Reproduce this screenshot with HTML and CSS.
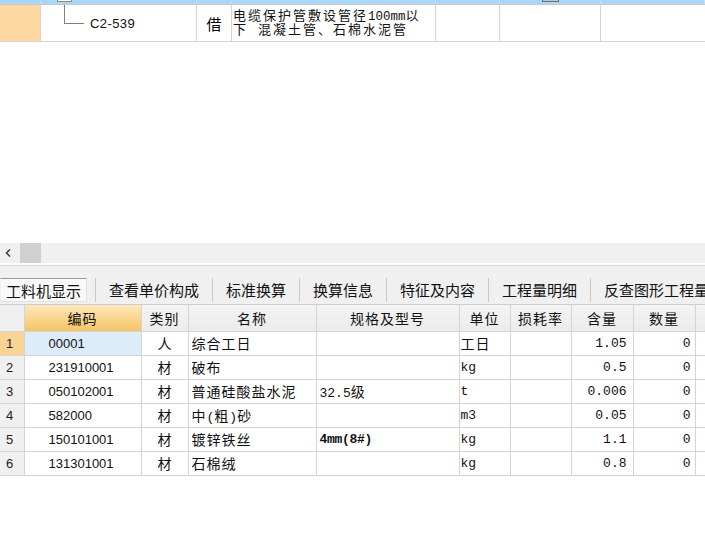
FILE: index.html
```html
<!DOCTYPE html>
<html lang="zh-CN">
<head>
<meta charset="utf-8">
<title>工料机显示</title>
<link rel="stylesheet" href="styles.css">
</head>
<body>
<div class="page">
  <div class="upper">
    <div class="band">
      <div class="bc"></div>
      <div class="bc"><span class="expander"></span></div>
      <div class="bc"></div>
      <div class="bc"></div>
      <div class="bc"></div>
      <div class="bc"><span class="check"></span></div>
      <div class="bc"></div>
    </div>
    <div class="row">
      <div class="cell mark"></div>
      <div class="cell tree"><span class="branch"></span><span class="tcode">C2-539</span></div>
      <div class="cell kind-top">借</div>
      <div class="cell desc">
        <div class="dline">电缆保护管敷设管径<span class="mm">100mm</span>以</div>
        <div class="dline">下<span class="gap"></span>混凝土管、石棉水泥管</div>
      </div>
      <div class="cell"></div>
      <div class="cell"></div>
      <div class="cell"></div>
    </div>
  </div>

  <div class="blank"></div>

  <div class="hscroll">
    <svg class="arrow" width="6" height="8" viewBox="0 0 6 8"><path d="M5 0.5 L1.5 4 L5 7.5" fill="none" stroke="#404040" stroke-width="1.6"/></svg>
    <span class="thumb"></span>
  </div>

  <div class="tabs">
    <span class="tab active">工料机显示</span>
    <span class="sep"></span>
    <span class="tab">查看单价构成</span>
    <span class="sep"></span>
    <span class="tab">标准换算</span>
    <span class="sep"></span>
    <span class="tab">换算信息</span>
    <span class="sep"></span>
    <span class="tab">特征及内容</span>
    <span class="sep"></span>
    <span class="tab">工程量明细</span>
    <span class="sep"></span>
    <span class="tab">反查图形工程量</span>
  </div>

  <table class="grid">
    <colgroup>
      <col class="w-idx"><col class="w-code"><col class="w-kind"><col class="w-name"><col class="w-spec">
      <col class="w-unit"><col class="w-loss"><col class="w-qty"><col class="w-amt"><col class="w-rest">
    </colgroup>
    <thead>
      <tr>
        <th class="idx"></th><th class="hot">编码</th><th>类别</th><th>名称</th><th>规格及型号</th>
        <th>单位</th><th>损耗率</th><th>含量</th><th>数量</th><th class="rest"></th>
      </tr>
    </thead>
    <tbody>
      <tr><td class="idx cur">1</td><td class="code picked">00001</td><td class="kind">人</td><td class="name">综合工日</td><td class="spec"></td><td class="unit cjk">工日</td><td></td><td class="num">1.05</td><td class="num amt">0</td><td></td></tr>
      <tr><td class="idx">2</td><td class="code">231910001</td><td class="kind">材</td><td class="name">破布</td><td class="spec"></td><td class="unit">kg</td><td></td><td class="num">0.5</td><td class="num amt">0</td><td></td></tr>
      <tr><td class="idx">3</td><td class="code">050102001</td><td class="kind">材</td><td class="name">普通硅酸盐水泥</td><td class="spec">32.5<span class="cjk">级</span></td><td class="unit">t</td><td></td><td class="num">0.006</td><td class="num amt">0</td><td></td></tr>
      <tr><td class="idx">4</td><td class="code">582000</td><td class="kind">材</td><td class="name">中<span class="par">(</span>粗<span class="par">)</span>砂</td><td class="spec"></td><td class="unit">m3</td><td></td><td class="num">0.05</td><td class="num amt">0</td><td></td></tr>
      <tr><td class="idx">5</td><td class="code">150101001</td><td class="kind">材</td><td class="name">镀锌铁丝</td><td class="spec strong">4mm(8#)</td><td class="unit">kg</td><td></td><td class="num">1.1</td><td class="num amt">0</td><td></td></tr>
      <tr><td class="idx">6</td><td class="code">131301001</td><td class="kind">材</td><td class="name">石棉绒</td><td class="spec"></td><td class="unit">kg</td><td></td><td class="num">0.8</td><td class="num amt">0</td><td></td></tr>
    </tbody>
  </table>
</div>
</body>
</html>
```

FILE: styles.css
```css
* { box-sizing: border-box; }

html, body {
  margin: 0;
  padding: 0;
  background: #ffffff;
}

body {
  width: 705px;
  height: 540px;
  overflow: hidden;
  font-family: "Noto Sans CJK SC", "Liberation Sans", sans-serif;
  color: #000;
}

.page {
  width: 705px;
}

/* ---------- upper tree grid ---------- */
.band,
.row {
  display: grid;
  grid-template-columns: 41px 156px 35px 204px 64px 101px 104px;
}

.band {
  height: 5px;
  background: #a9d7f7;
  border-bottom: 1px solid #c9c9c9;
  overflow: hidden;
}

.bc {
  border-right: 1px solid #c4ddef;
  display: flex;
  align-items: flex-start;
}

.expander {
  margin-left: 16px;
  width: 15px;
  height: 2px;
  background: #ffffff;
  border: 1px solid #8c8c8c;
  border-top: none;
}

.check {
  margin-left: 42px;
  width: 17px;
  height: 2px;
  background: #c4c4c4;
  border: 1px solid #6e6e6e;
  border-top: none;
}

.row {
  height: 37px;
  border-bottom: 1px solid #d4d4d4;
}

.cell {
  border-right: 1px solid #d4d4d4;
}

.cell:last-child {
  border-right: none;
}

.mark {
  background: #fdd8a1;
}

.tree {
  display: flex;
  align-items: flex-start;
}

.branch {
  margin-left: 23px;
  width: 20px;
  height: 19px;
  border-left: 1px solid #808080;
  border-bottom: 1px solid #808080;
}

.tcode {
  margin-left: 6px;
  margin-top: 12px;
  font-family: "Liberation Sans", sans-serif;
  font-size: 13px;
  letter-spacing: 0.4px;
  line-height: 14px;
  color: #111;
}

.kind-top {
  font-size: 15px;
  line-height: 16px;
  padding-top: 11px;
  text-align: center;
}

.desc {
  padding-top: 3px;
  padding-left: 1px;
  font-size: 13px;
  letter-spacing: 2px;
  white-space: nowrap;
  color: #111;
}

.dline {
  height: 14px;
  line-height: 14px;
}

.mm {
  font-family: "Liberation Mono", monospace;
  font-size: 12.5px;
  letter-spacing: 0;
  line-height: 14px;
}

.gap {
  display: inline-block;
  width: 10px;
}

.blank {
  height: 201px;
}

/* ---------- horizontal scroll strip ---------- */
.hscroll {
  height: 20px;
  background: #f0f0f0;
  display: flex;
  align-items: center;
}

.arrow {
  margin-left: 5px;
}

.thumb {
  margin-left: 9px;
  width: 21px;
  height: 20px;
  background: #d0d0d0;
}

/* ---------- tab strip ---------- */
.tabs {
  margin-top: 2px;
  height: 40px;
  background: #f0f0f0;
  border-top: 1px solid #d6d6d6;
  border-bottom: 1px solid #cdcdcd;
  display: flex;
  align-items: flex-end;
  padding-bottom: 2px;
  white-space: nowrap;
  overflow: hidden;
  font-size: 15px;
  color: #111;
}

.tab {
  flex: none;
  height: 24px;
  padding: 1px 13px 0;
  line-height: 21px;
}

.tab.active {
  padding: 1px 5px 0 5px;
  margin-right: 8px;
  background: #f9f9f9;
  border: 1px solid;
  border-color: #9a9a9a #e2e2e2 #e2e2e2 #f0f0f0;
}

.sep {
  flex: none;
  width: 1px;
  height: 24px;
  background: #c8c8c8;
}

/* ---------- material grid ---------- */
.grid {
  width: 705px;
  table-layout: fixed;
  border-collapse: collapse;
  font-size: 14px;
}

.w-idx { width: 24px; }
.w-code { width: 117px; }
.w-kind { width: 47px; }
.w-name { width: 128px; }
.w-spec { width: 143px; }
.w-unit { width: 51px; }
.w-loss { width: 61px; }
.w-qty { width: 62px; }
.w-amt { width: 62px; }
.w-rest { width: 10px; }

.grid th,
.grid td {
  border: 1px solid #d4d4d4;
  padding: 0;
  white-space: nowrap;
  overflow: hidden;
}

.grid thead th {
  border-top: none;
}

.grid th:first-child,
.grid td:first-child {
  border-left: none;
}

.grid th:last-child,
.grid td:last-child {
  border-right: none;
}

.grid th {
  height: 26px;
  font-weight: normal;
  letter-spacing: 1px;
  text-align: center;
  background: linear-gradient(#f4f4f4, #ebebeb);
  color: #111;
}

.grid th.idx {
  background: #f0f0f0;
}

.grid th.hot {
  background: linear-gradient(#fde7bb, #f5c466);
}

.grid td {
  height: 24px;
  color: #111;
}

.grid td.idx {
  background: #f0f0f0;
  font-family: "Liberation Sans", sans-serif;
  font-size: 13px;
  padding-left: 6px;
  color: #222;
}

.grid td.idx.cur {
  background: #fbd395;
}

.grid td.code {
  font-family: "Liberation Sans", sans-serif;
  font-size: 13px;
  padding-left: 24px;
}

.grid td.picked {
  background: #ddecfb;
}

.grid td.kind {
  text-align: center;
  letter-spacing: 0;
}

.grid td.name {
  padding-left: 3px;
  letter-spacing: 1px;
}

.par {
  font-family: "Liberation Mono", monospace;
  font-size: 13px;
  letter-spacing: 0;
}

.grid td.spec {
  padding-left: 3px;
  font-family: "Liberation Mono", monospace;
  font-size: 13px;
}

.grid td.strong {
  font-weight: bold;
  letter-spacing: -0.3px;
}

.cjk {
  font-family: "Noto Sans CJK SC", sans-serif;
  font-size: 14px;
}

.grid td.unit {
  padding-left: 1px;
  font-family: "Liberation Mono", monospace;
  font-size: 13px;
}

.grid td.unit.cjk {
  font-family: "Noto Sans CJK SC", sans-serif;
  font-size: 14px;
  letter-spacing: 1px;
}

.grid td.num {
  text-align: right;
  padding-right: 6px;
  font-family: "Liberation Mono", monospace;
  font-size: 13px;
}

.grid td.amt {
  padding-right: 4px;
}
```
